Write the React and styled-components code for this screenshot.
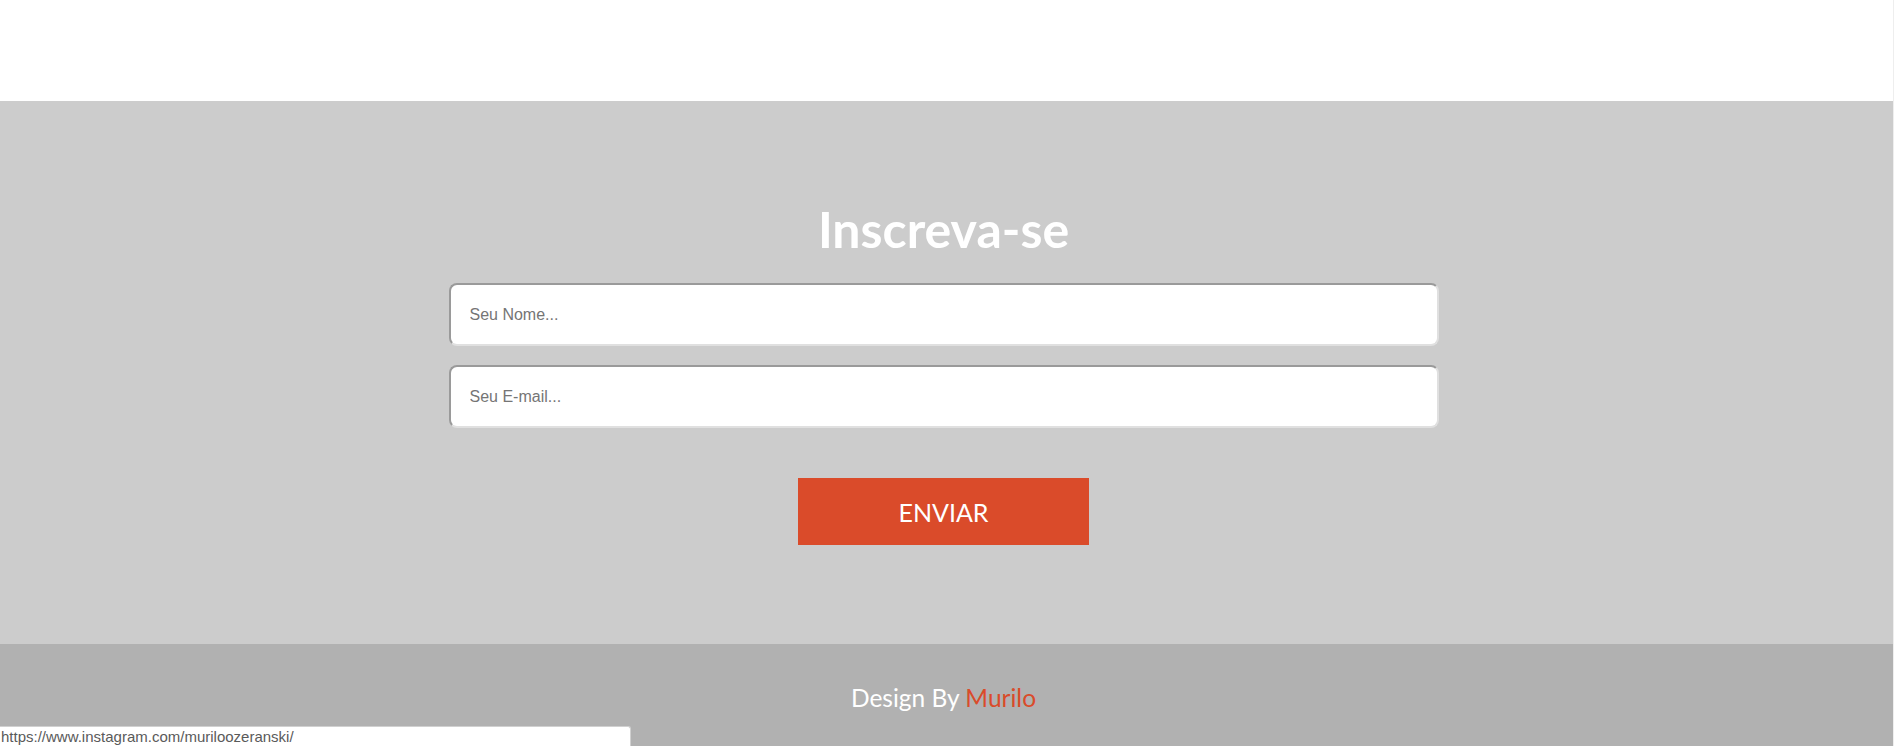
import React from "react";
import styled, { createGlobalStyle } from "styled-components";

const Global = createGlobalStyle`
  html, body { margin: 0; padding: 0; background: #ffffff; }
  body { font-family: Lato, "Open Sans", sans-serif; overflow: hidden; }
  * { box-sizing: border-box; }
`;

const Page = styled.div`
  position: relative;
  width: 100%;
  height: 746px;
  overflow: hidden;
  border-right: 1px solid #eeeeee;
`;

const Header = styled.header`
  height: 101px;
  background: #ffffff;
`;

const Subscribe = styled.section`
  background: #cccccc;
  height: 543px;
  padding: 98px 6px 0 0;
  display: flex;
  flex-direction: column;
  align-items: center;
`;

const Title = styled.h2`
  margin: 0;
  font-family: Lato, sans-serif;
  font-weight: 700;
  font-size: 50px;
  line-height: 60px;
  color: #ffffff;
`;

const Form = styled.form`
  margin-top: 24px;
  display: flex;
  flex-direction: column;
  align-items: center;
  gap: 19px;
`;

const Input = styled.input`
  width: 990px;
  height: 63px;
  border-width: 2px;
  border-style: solid;
  border-color: #9a9a9a #e0e0e0 #e0e0e0 #9a9a9a;
  border-radius: 8px;
  background: #ffffff;
  padding: 0 19px;
  font-family: "Liberation Sans", Arial, sans-serif;
  font-size: 16px;
  color: #333;
  outline: none;
  &::placeholder { color: #757575; }
`;

const Button = styled.button`
  margin-top: 31px;
  width: 291px;
  height: 67px;
  border: none;
  background: #da4b2a;
  color: #ffffff;
  font-family: Lato, sans-serif;
  font-size: 25px;
  cursor: pointer;
`;

const Footer = styled.footer`
  background: #b1b1b1;
  height: 102px;
  padding-top: 39px;
  padding-right: 6px;
  text-align: center;
  font-family: Lato, sans-serif;
  font-size: 24.5px;
  line-height: 30px;
  color: #ffffff;
`;

const Accent = styled.a`
  color: #da4b2a;
  text-decoration: none;
`;

const StatusBar = styled.div`
  position: absolute;
  left: 0;
  bottom: 0;
  width: 631px;
  height: 20px;
  background: #ffffff;
  border: 1px solid #d0d0d0;
  border-left: none;
  border-bottom: none;
  border-top-right-radius: 3px;
  padding: 0 0 0 1px;
  font-family: "Liberation Sans", Arial, sans-serif;
  font-size: 15px;
  line-height: 19px;
  color: #5a5a5a;
  white-space: nowrap;
`;

export default function App() {
  return (
    <>
      <Global />
      <Page>
        <Header />
        <Subscribe>
          <Title>Inscreva-se</Title>
          <Form onSubmit={(e) => e.preventDefault()}>
            <Input type="text" placeholder="Seu Nome..." />
            <Input type="email" placeholder="Seu E-mail..." />
            <Button type="submit">ENVIAR</Button>
          </Form>
        </Subscribe>
        <Footer>
          Design By <Accent href="#">Murilo</Accent>
        </Footer>
        <StatusBar>https://www.instagram.com/muriloozeranski/</StatusBar>
      </Page>
    </>
  );
}
